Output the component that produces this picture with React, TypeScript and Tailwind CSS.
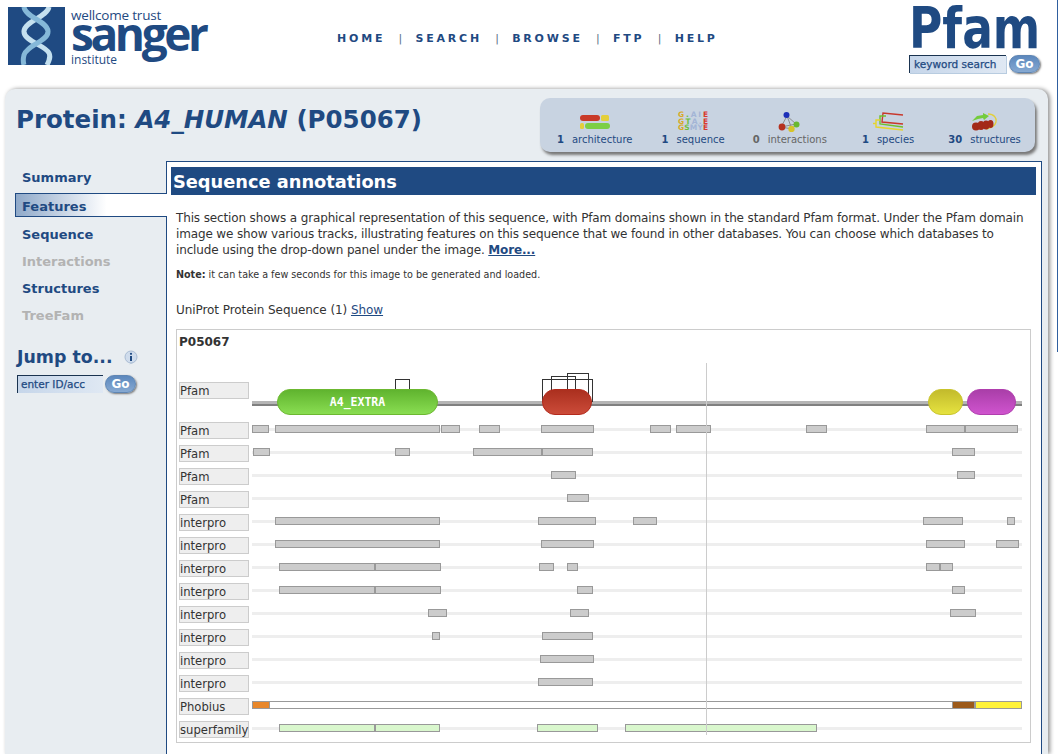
const TOP_LINKS = ['HOME', 'SEARCH', 'BROWSE', 'FTP', 'HELP']

// bars are [from, to] in page x, the svg viewBox keeps the same numbers
const TRACKS: { label: string; bars: number[][] }[] = [
  { label: 'Pfam', bars: [[252, 269], [275, 440], [441, 460], [479, 500], [541, 594], [650, 671], [676, 711], [806, 827], [926, 965], [965, 1018]] },
  { label: 'Pfam', bars: [[253, 270], [395, 410], [473, 542], [542, 593], [952, 975]] },
  { label: 'Pfam', bars: [[551, 576], [957, 975]] },
  { label: 'Pfam', bars: [[567, 589]] },
  { label: 'interpro', bars: [[275, 440], [538, 596], [633, 657], [923, 963], [1007, 1015]] },
  { label: 'interpro', bars: [[275, 440], [541, 594], [926, 965], [996, 1019]] },
  { label: 'interpro', bars: [[279, 375], [375, 441], [539, 554], [567, 578], [926, 940], [940, 953]] },
  { label: 'interpro', bars: [[279, 375], [375, 441], [577, 593], [952, 965]] },
  { label: 'interpro', bars: [[428, 447], [570, 589], [950, 976]] },
  { label: 'interpro', bars: [[432, 440], [542, 593]] },
  { label: 'interpro', bars: [[540, 594]] },
  { label: 'interpro', bars: [[538, 593]] },
]

const SUPERFAMILY = [[279, 375], [375, 440], [537, 598], [625, 817]]

function TrackLabel({ children }: { children: string }) {
  return (
    <div className="flex h-[17px] w-[70px] shrink-0 items-center border border-[#ccc] bg-[#eee] pt-[2px] text-[11.6px] whitespace-nowrap text-[#333]">
      {children}
    </div>
  )
}

function Bar({ from, to, fill = '#ccc' }: { from: number; to: number; fill?: string }) {
  return <rect x={from + 0.5} y={3.5} width={to - from - 1} height={7} fill={fill} stroke="#999" />
}

function Track({ label, bars, fill }: { label: string; bars: number[][]; fill?: string }) {
  return (
    <div className="flex h-[17px] gap-[3px]">
      <TrackLabel>{label}</TrackLabel>
      <svg width={770} height={17} viewBox="252 0 770 17" className="shrink-0">
        <rect x={252} y={6} width={770} height={3} fill="#eee" />
        {bars.map(([from, to]) => (
          <Bar key={from} from={from} to={to} fill={fill} />
        ))}
      </svg>
    </div>
  )
}

function Domain({ id, x, w, top, bottom, edge, children }: { id: string; x: number; w: number; top: string; bottom: string; edge: string; children?: string }) {
  return (
    <g>
      <defs>
        <linearGradient id={id} x1="0" y1="0" x2="0" y2="1">
          <stop offset="0" stopColor={top} />
          <stop offset="1" stopColor={bottom} />
        </linearGradient>
      </defs>
      <rect x={x + 0.5} y={19.5} width={w - 1} height={25} rx={12.5} fill={`url(#${id})`} stroke={edge} />
      {children && (
        <text x={x + w / 2} y={36} textAnchor="middle" fontFamily="'DejaVu Sans Mono', monospace" fontSize={11.5} fontWeight={700} fill="#fff">
          {children}
        </text>
      )}
    </g>
  )
}

function DomainRow() {
  return (
    <div className="flex h-[52px] items-start gap-[3px]">
      <div className="mt-[12px]">
        <TrackLabel>Pfam</TrackLabel>
      </div>
      <svg width={770} height={50} viewBox="252 370 770 50" className="shrink-0">
        <g transform="translate(0 370)">
          <rect x={252} y={31} width={770} height={3} fill="#b5b5b5" />
          <rect x={252} y={34} width={770} height={2} fill="#808080" />
          <g fill="none" stroke="#333">
            <rect x={395.5} y={9.5} width={14} height={15} />
            <rect x={542.5} y={9.5} width={50} height={22} />
            <rect x={551.5} y={6.5} width={24} height={20} />
            <rect x={567.5} y={3.5} width={21} height={24} />
          </g>
          <Domain id="dom-green" x={277} w={161} top="#5fb32e" bottom="#8ade52" edge="#6cb830">A4_EXTRA</Domain>
          <Domain id="dom-red" x={542} w={50} top="#aa2f1e" bottom="#cc4c3a" edge="#b42a1c" />
          <Domain id="dom-yellow" x={928} w={35} top="#c2ba2c" bottom="#e6e340" edge="#c9c42c" />
          <Domain id="dom-purple" x={967} w={49} top="#a93ea8" bottom="#d054cf" edge="#b03eae" />
        </g>
      </svg>
    </div>
  )
}

function PhobiusTrack() {
  return (
    <div className="flex h-[17px] gap-[3px]">
      <TrackLabel>Phobius</TrackLabel>
      <svg width={770} height={17} viewBox="252 0 770 17" className="shrink-0">
        <rect x={252.5} y={3.5} width={769} height={7} fill="#fff" stroke="#999" />
        <Bar from={252} to={270} fill="#e8872a" />
        <Bar from={952} to={975} fill="#9c5a1a" />
        <Bar from={975} to={1022} fill="#fff23a" />
      </svg>
    </div>
  )
}

function SequenceChart() {
  return (
    <div className="relative mr-[10px] ml-[9px] border border-[#ccc] px-[2px] pt-[3px] pb-[4px]">
      <div className="h-[37px] pt-[1px] text-[12px] leading-[16px] font-bold text-[#333]">P05067</div>
      <DomainRow />
      <div className="flex flex-col gap-[6px]">
        {TRACKS.map((t, i) => (
          <Track key={i} label={t.label} bars={t.bars} />
        ))}
        <PhobiusTrack />
        <Track label="superfamily" bars={SUPERFAMILY} fill="#d9f7cd" />
      </div>
      {/* sequence position marker */}
      <div className="absolute top-[33px] left-[529px] h-[372px] w-px bg-[#ccc]" />
    </div>
  )
}

function ArchitectureIcon() {
  return (
    <svg width={34} height={20} viewBox="577 112 34 20">
      <rect x={579} y={115} width={20} height={6} rx={3} fill="#c93a28" />
      <rect x={600} y={115} width={8} height={6} rx={1.5} fill="#e4cf3a" />
      <rect x={579} y={123} width={4} height={6} rx={1.5} fill="#e4cf3a" />
      <rect x={584} y={123} width={25} height={6} rx={3} fill="#7ccf45" />
    </svg>
  )
}

function SequenceIcon() {
  const rows = [
    ['G', '.', 'A', 'I', 'E'],
    ['G', 'T', 'A', '.', 'E'],
    ['G', 'S', 'M', 'Y', 'E'],
  ]
  const colors = ['#d9a925', '#6fbf3c', '#a3b5d6', '#a3b5d6', '#d93a2e']
  return (
    <div className="flex h-[20px] flex-col justify-center text-[7.5px] leading-[6.5px] font-bold">
      {rows.map((r, i) => (
        <div key={i} className="flex w-[30px] justify-between">
          {r.map((c, j) => (
            <span key={j} style={{ color: colors[j] }}>{c}</span>
          ))}
        </div>
      ))}
    </div>
  )
}

function InteractionsIcon() {
  return (
    <svg width={24} height={20} viewBox="778 112 24 20">
      <path d="M787 116 781 127 792 129 787 116 796 124 792 129M781 127 796 124" stroke="#8d8d8d" fill="none" />
      <circle cx={786.5} cy={115} r={3} fill="#1c2fb8" />
      <circle cx={782} cy={127} r={3.4} fill="#b5301f" />
      <circle cx={796.5} cy={124.5} r={3} fill="#69b82e" />
      <circle cx={791.5} cy={129} r={3.2} fill="#d6c42a" />
    </svg>
  )
}

function SpeciesIcon() {
  return (
    <svg width={32} height={20} viewBox="874 112 32 20" fill="none" strokeWidth={1.4}>
      <path d="M905 115 885 113 884 122 905 124" stroke="#c8382c" />
      <path d="M888 116H882V124L905 127" stroke="#6fc02e" />
      <path d="M882 120H878V127L905 130M875 123.5H878" stroke="#e6d52c" />
    </svg>
  )
}

function StructuresIcon() {
  return (
    <svg width={28} height={20} viewBox="977 112 28 20" fill="none">
      <path d="M994 114C1000 114 1003 118 1002 122 1001 126 997 128 992 129" stroke="#e2cf3a" strokeWidth={1.3} />
      <path d="M978 121 983 116 989 115 989 113 995 116 990 120 989 118 984 119Z" fill="#74cc3c" />
      <g fill="#a32a18">
        <ellipse cx={982} cy={126.5} rx={4} ry={4} />
        <ellipse cx={987} cy={125.5} rx={3.5} ry={4.5} />
        <ellipse cx={992} cy={125} rx={3.5} ry={4.5} />
        <ellipse cx={996.5} cy={124} rx={3} ry={4} />
      </g>
    </svg>
  )
}

function Stat({ count, label, muted, className = '', children }: { count: number; label: string; muted?: boolean; className?: string; children: React.ReactNode }) {
  return (
    <div className={`flex flex-col items-center ${className}`}>
      <div className="flex h-[20px] items-center justify-center">{children}</div>
      <div className={`mt-[1px] flex gap-[8px] text-[10px] leading-[13px] whitespace-nowrap ${muted ? 'text-[#666]' : 'text-[#1f4a82]'}`}>
        <b>{count}</b>
        <span>{label}</span>
      </div>
    </div>
  )
}

function SideLink({ children, off }: { children: string; off?: boolean }) {
  return (
    <div className={`flex h-[27px] items-center pl-[17px] text-[13px] font-bold ${off ? 'text-[#b3b3b3]' : 'text-[#1f4a82]'}`}>
      {children}
    </div>
  )
}

function GoButton() {
  return (
    <div className="flex h-[18px] w-[31px] items-center justify-center rounded-full border border-[#5f86b4] bg-gradient-to-b from-[#5c88bd] to-[#86a9d2] text-[12px] font-bold text-white shadow-[1px_1px_2px_#777]">
      Go
    </div>
  )
}

function SangerLogo() {
  return (
    <div className="ml-[8px] flex w-[329px] shrink-0 items-start pt-[7px]">
      <div className="h-[58px] w-[57px] bg-[#1f4a82]">
        <svg width={57} height={58} viewBox="0 0 57 58" fill="none" strokeWidth={5}>
          <path d="M41 0C39 10 17 14 16 24 15 34 37 38 41 46 43 50 41 54 39 58" stroke="#c4e0ef" />
          <path d="M16 0C17 10 39 14 40 24 41 34 19 38 16 48 15 52 15 55 16 58" stroke="#85b8d8" />
        </svg>
      </div>
      <div className="ml-[6px] flex flex-col font-['Open_Sans',sans-serif] text-[#1f4a82]">
        <div className="text-[13.5px] leading-[16px] tracking-[-0.2px] whitespace-nowrap">wellcome trust</div>
        <div className="mt-[-12px] text-[46px] leading-[44px] font-bold tracking-[-3.4px]">sanger</div>
        <div className="mt-[-2px] text-[12px] leading-[14px]">institute</div>
      </div>
    </div>
  )
}

function TopNav() {
  return (
    <nav className="mt-[31px] flex items-center self-start text-[11px] leading-[15px] font-bold tracking-[2.8px] text-[#1f4a82]">
      {TOP_LINKS.map((l, i) => (
        <span key={l} className="flex items-center">
          {i > 0 && <span className="mx-[13.25px] font-normal tracking-normal text-[#5a6f86]">|</span>}
          {l}
        </span>
      ))}
    </nav>
  )
}

function PfamSearch() {
  return (
    <div className="mr-[18px] ml-auto flex w-[131px] flex-col pt-[8px]">
      <div className="h-[41px] scale-y-125 text-[45.5px] leading-[41px] font-bold whitespace-nowrap text-[#1f4a82]">Pfam</div>
      <div className="mt-[6px] flex items-center gap-[3px]">
        <div className="flex h-[18px] w-[97px] shrink-0 items-center border-t border-l border-t-[#1a3350] border-l-[#1a3350] bg-gradient-to-r from-[#c6d6ea] to-[#dfe8f3] pl-[4px] text-[10.5px] whitespace-nowrap text-[#1f4a82] shadow-[1px_1px_0_#b8cce0] [-webkit-text-stroke:0.25px_#1f4a82]">
          keyword search
        </div>
        <GoButton />
      </div>
    </div>
  )
}

export default function App() {
  return (
    <div className="relative h-screen overflow-hidden bg-white font-['DejaVu_Sans',sans-serif]">
      <header className="flex h-[89px]">
        <SangerLogo />
        <TopNav />
        <PfamSearch />
      </header>

      <main className="mr-[10px] ml-[5px] h-[665px] rounded-t-[10px] bg-[#e8edf1] shadow-[2px_0_4px_#8f8f8f]">
        <div className="flex h-[72px] items-start justify-between pt-[9px] pr-[13px] pl-[11px]">
          <h1 className="mt-[6px] text-[24.5px] leading-[32px] font-bold whitespace-nowrap text-[#1f4a82]">
            Protein: <i>A4_HUMAN</i> (P05067)
          </h1>
          <div className="flex h-[54px] w-[495px] gap-[28px] rounded-[10px] bg-[#c8d3e1] pt-[14px] pl-[17px] shadow-[2px_3px_3px_#777]">
            <Stat count={1} label="architecture"><ArchitectureIcon /></Stat>
            <Stat count={1} label="sequence" className="ml-[1px]"><SequenceIcon /></Stat>
            <Stat count={0} label="interactions" muted><InteractionsIcon /></Stat>
            <Stat count={1} label="species" className="ml-[7px]"><SpeciesIcon /></Stat>
            <Stat count={30} label="structures" className="ml-[6px]"><StructuresIcon /></Stat>
          </div>
        </div>

        <div className="flex h-[600px] items-start">
          <aside className="relative z-10 w-[161px] shrink-0 pt-[3px]">
            <SideLink>Summary</SideLink>
            <div className="mt-[2px] mr-[-1px] ml-[10px] flex h-[24px] items-center border-y border-l border-[#1f4a82] bg-gradient-to-r from-[#8fa9c9] via-white via-60% to-white pt-[3px] pl-[6px] text-[13px] font-bold text-[#1f4a82]">
              Features
            </div>
            <div className="mt-[4px]">
              <SideLink>Sequence</SideLink>
              <SideLink off>Interactions</SideLink>
              <SideLink>Structures</SideLink>
              <SideLink off>TreeFam</SideLink>
            </div>
            <div className="mt-[16px] ml-[12px] flex h-[24px] items-center gap-[11px]">
              <span className="text-[17.4px] font-bold whitespace-nowrap text-[#1f4a82]">Jump to...</span>
              <svg width={14} height={15} viewBox="0 0 14 15">
                <circle cx={7} cy={7} r={6} fill="#cfdcec" stroke="#a9bcd4" />
                <path d="M7 13 5 14.5 9 13Z" fill="#a9bcd4" />
                <circle cx={7} cy={3.8} r={1.1} fill="#1f4a82" />
                <rect x={6} y={6} width={2} height={5} fill="#1f4a82" />
              </svg>
            </div>
            <div className="mt-[6px] ml-[12px] flex items-center gap-[2px]">
              <div className="flex h-[18px] w-[86px] items-center border-t border-l border-t-[#1a3350] border-l-[#1a3350] bg-gradient-to-r from-[#c6d6ea] to-[#dfe8f3] pl-[3px] text-[10.5px] text-[#1f4a82] [-webkit-text-stroke:0.25px_#1f4a82]">
                enter ID/acc
              </div>
              <GoButton />
            </div>
          </aside>

          <section className="mr-[6px] h-full min-w-0 flex-1 border border-[#1f4a82] bg-white pt-[5px]">
            <h2 className="mr-[5px] ml-[4px] flex h-[28px] items-center bg-[#1f4a82] pt-[3px] pl-[2px] text-[17.8px] font-bold text-white">
              Sequence annotations
            </h2>
            <p className="mt-[15px] mr-[8px] ml-[9px] text-[12px] leading-[16px] tracking-[-0.14px] text-[#333]">
              This section shows a graphical representation of this sequence, with Pfam domains shown in the standard Pfam format. Under the Pfam domain image we show various tracks, illustrating features on this sequence that we found in other databases. You can choose which databases to include using the drop-down panel under the image.{' '}
              <a className="font-bold text-[#1f4a82] underline">More...</a>
            </p>
            <p className="mt-[11px] ml-[9px] text-[9.6px] leading-[12px] text-[#333]">
              <b>Note:</b> it can take a few seconds for this image to be generated and loaded.
            </p>
            <p className="mt-[21px] ml-[9px] text-[12px] leading-[16px] tracking-[-0.07px] text-[#333]">
              UniProt Protein Sequence (1) <a className="text-[#1f4a82] underline">Show</a>
            </p>
            <div className="mt-[11px]">
              <SequenceChart />
            </div>
          </section>
        </div>
      </main>

      {/* sliver of the window scrollbar thumb at the edge */}
      <div className="absolute top-0 right-0 h-[352px] w-px bg-[#2f5f9f]" />
    </div>
  )
}
